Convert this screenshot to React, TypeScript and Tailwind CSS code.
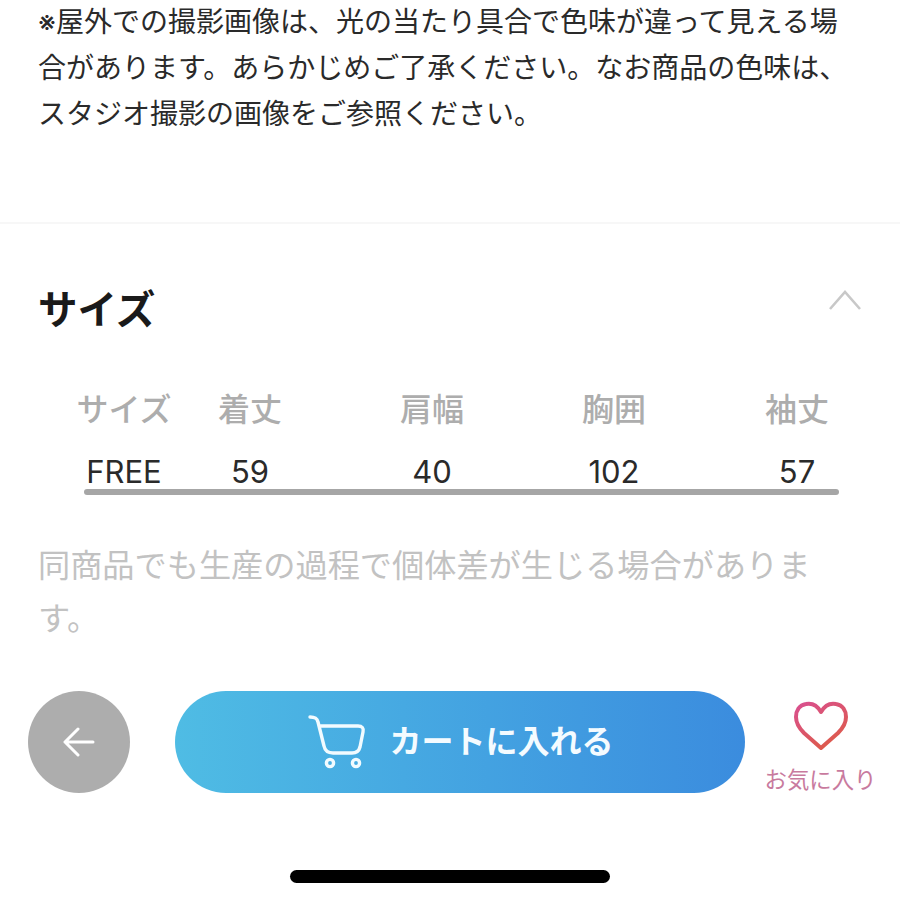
/**
 * Product size section with the bottom cart bar.
 */

const fontStack = "font-['Inter','Noto_Sans_CJK_JP',sans-serif]";

const sizeColumns = [
  { label: 'サイズ', value: 'FREE' },
  { label: '着丈', value: '59' },
  { label: '肩幅', value: '40' },
  { label: '胸囲', value: '102' },
  { label: '袖丈', value: '57' },
];

function CartIcon() {
  return (
    <svg width="58" height="54" viewBox="0 0 58 54" fill="none" stroke="#f2fbff" strokeWidth="3.4" strokeLinecap="round" strokeLinejoin="round">
      <path d="M2 2 C7 2 9 3 10 7 L16 31 C17 36 20 38 25 38 H44 C49 38 51 36 52 32 L55 17 C56 13 54 11 50 11 H12" />
      <circle cx="22" cy="48" r="3.6" />
      <circle cx="48" cy="48" r="3.6" />
    </svg>
  );
}

function HeartIcon() {
  return (
    <svg width="54" height="50" viewBox="0 0 54 50" fill="none" strokeWidth="4" strokeLinejoin="round">
      <defs>
        <linearGradient id="heartStroke" x1="0" y1="0" x2="0.6" y2="1">
          <stop offset="0" stopColor="#d9508f" />
          <stop offset="1" stopColor="#dd5a4c" />
        </linearGradient>
      </defs>
      <path
        stroke="url(#heartStroke)"
        d="M27 11 C23 4 17 2 12 3 C5 4 2 10 2 16 C2 22 5 27 10 32 L27 47 L44 32 C49 27 52 22 52 16 C52 10 49 4 42 3 C37 2 31 4 27 11 Z"
      />
    </svg>
  );
}

export default function App() {
  return (
    <div className={`${fontStack} flex h-[900px] w-[900px] flex-col overflow-hidden bg-white`}>
      <p className="mt-[-1px] whitespace-nowrap px-[38px] text-[28px] leading-[46px] text-[#2a2a2a]">
        ※屋外での撮影画像は、光の当たり具合で色味が違って見える場
        <br />
        合があります。あらかじめご了承ください。なお商品の色味は、
        <br />
        スタジオ撮影の画像をご参照ください。
      </p>

      <div className="mt-[85px] h-[2px] bg-[#f7f7f7]" />

      {/* Header */}
      <div className="mt-[58px] flex items-center justify-between px-[38px]">
        <h2 className="text-[39.5px] font-bold leading-[56px] text-[#1a1a1a]">サイズ</h2>
        <svg className="mb-[20px]" width="34" height="22" viewBox="0 0 34 22" fill="none" stroke="#c8c8c8" strokeWidth="2.6">
          <path d="M2 20 L17 3 L32 20" />
        </svg>
      </div>

      {/* Size table */}
      <div className="mt-[49px] pl-[84px]">
        <div className="grid grid-cols-[80px_172px_192px_172px_194px] justify-start text-center">
          {sizeColumns.map((col) => (
            <div key={col.label} className="flex flex-col items-center whitespace-nowrap">
              <span className="text-[32px] font-medium leading-[46px] text-[#adadad]">{col.label}</span>
              <span className="mt-[19px] text-[31px] leading-[40px] text-[#2a2a2a]">{col.value}</span>
            </div>
          ))}
        </div>
        <div className="mt-[-3px] h-[6px] w-[755px] rounded-full bg-[#a6a6a6]" />
      </div>

      <p className="mt-[44px] whitespace-nowrap px-[38px] text-[32.2px] leading-[53px] text-[#c2c2c2]">
        同商品でも生産の過程で個体差が生じる場合がありま
        <br />
        す。
      </p>

      {/* Bottom actions */}
      <div className="mt-[46px] flex h-[102px] items-start pl-[28px]">
        <button className="flex h-[102px] w-[102px] items-center justify-center rounded-full bg-[#adadad]">
          <svg width="32" height="30" viewBox="0 0 32 30" fill="none" stroke="#ffffff" strokeWidth="3" strokeLinecap="round" strokeLinejoin="round">
            <path d="M2 15 H30 M15 2 L2 15 L15 28" />
          </svg>
        </button>
        <button className="ml-[45px] flex h-[102px] w-[570px] items-center justify-center gap-[23px] rounded-full bg-gradient-to-r from-[#4fbce4] to-[#3b8cde] pl-[2px]">
          <CartIcon />
          <span className="text-[32px] font-bold text-[#f4fbff]">カートに入れる</span>
        </button>
        <div className="ml-[20px] flex w-[111px] flex-col items-center pt-[10px]">
          <HeartIcon />
          <span className="mt-[13px] whitespace-nowrap text-[22.4px] leading-[32px] text-[#c87a9e]">お気に入り</span>
        </div>
      </div>

      {/* Home indicator */}
      <div className="ml-[290px] mt-[77px] h-[13px] w-[320px] rounded-full bg-black" />
    </div>
  );
}
